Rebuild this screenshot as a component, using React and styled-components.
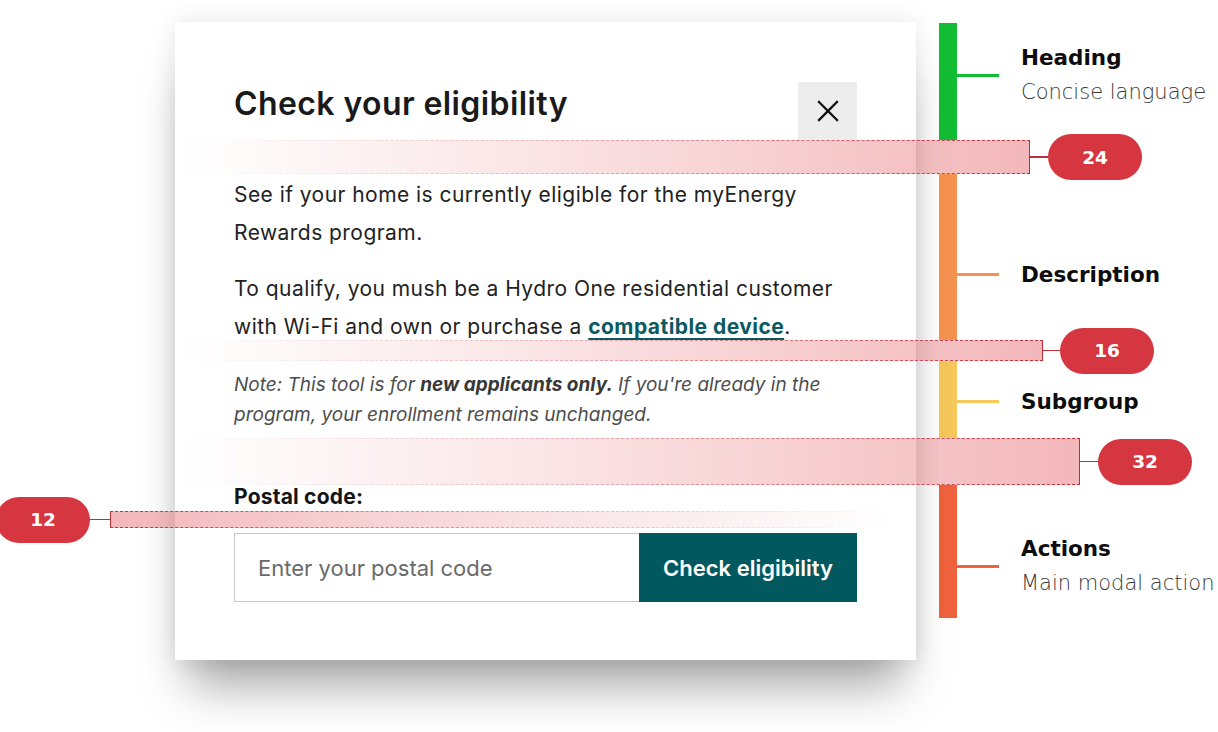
import styled, { createGlobalStyle } from "styled-components";

const GlobalStyle = createGlobalStyle`
  html, body {
    margin: 0;
    padding: 0;
    background: #ffffff;
  }
  body {
    width: 1218px;
    height: 732px;
    overflow: hidden;
    font-family: "Inter", "Roboto", sans-serif;
    color: #1f1f1f;
  }
  * {
    box-sizing: border-box;
  }
`;

const spacers = {
  heading: { height: 34, label: "24", side: "right", left: -49, right: -173, link: 18 },
  description: { height: 21, label: "16", side: "right", left: -49, right: -186, link: 17 },
  subgroup: { height: 47, label: "32", side: "right", left: -49, right: -223, link: 18 },
  label: { height: 17, label: "12", side: "left", left: -124, right: -33, link: 20 },
};

const sections = [
  { key: "heading", color: "#13bd33", height: 117, offset: 17, title: "Heading", sub: "Concise language" },
  { key: "gap1", gap: 34 },
  { key: "description", color: "#f5924f", height: 166, offset: 83, title: "Description" },
  { key: "gap2", gap: 21 },
  { key: "subgroup", color: "#f6c85b", height: 77, offset: 23, title: "Subgroup" },
  { key: "gap3", gap: 47 },
  { key: "actions", color: "#f0623d", height: 133, offset: 46, title: "Actions", sub: "Main modal action" },
];

function Spacing({ name }) {
  const s = spacers[name];
  return (
    <Spacer $height={s.height}>
      <Band $side={s.side} $left={s.left} $right={s.right} />
      <Callout $side={s.side} $left={s.left} $right={s.right}>
        {s.side === "left" && <Pill>{s.label}</Pill>}
        <Connector $width={s.link} />
        {s.side === "right" && <Pill>{s.label}</Pill>}
      </Callout>
    </Spacer>
  );
}

function CloseIcon() {
  return (
    <svg width="22" height="22" viewBox="0 0 22 22" fill="none">
      <path d="M2 2 L20 20 M20 2 L2 20" stroke="#111" strokeWidth="2.3" strokeLinecap="square" />
    </svg>
  );
}

export default function App() {
  return (
    <>
      <GlobalStyle />
      <Page>
        <Modal>
          <Header>
            <Title>Check your eligibility</Title>
            <CloseButton aria-label="Close">
              <CloseIcon />
            </CloseButton>
          </Header>
          <Spacing name="heading" />
          <Body>
            <Para>See if your home is currently eligible for the myEnergy Rewards program.</Para>
            <Para>
              To qualify, you mush be a Hydro One residential customer with Wi-Fi and own or purchase a{" "}
              <TextLink href="#">compatible device</TextLink>.
            </Para>
          </Body>
          <Spacing name="description" />
          <Note>
            Note: This tool is for <strong>new applicants only.</strong> If you're already in the program, your
            enrollment remains unchanged.
          </Note>
          <Spacing name="subgroup" />
          <FieldLabel htmlFor="postal">Postal code:</FieldLabel>
          <Spacing name="label" />
          <Form onSubmit={(e) => e.preventDefault()}>
            <PostalInput id="postal" placeholder="Enter your postal code" />
            <SubmitButton type="submit">Check eligibility</SubmitButton>
          </Form>
        </Modal>
        <Legend>
          {sections.map((s) =>
            s.gap ? (
              <LegendGap key={s.key} $height={s.gap} />
            ) : (
              <Section key={s.key} $height={s.height}>
                <Bar $color={s.color} />
                <Marker $offset={s.offset}>
                  <Tick $color={s.color} />
                  <LabelBlock>
                    <LegendTitle>{s.title}</LegendTitle>
                    {s.sub && <LegendSub>{s.sub}</LegendSub>}
                  </LabelBlock>
                </Marker>
              </Section>
            )
          )}
        </Legend>
      </Page>
    </>
  );
}

const Page = styled.div`
  display: flex;
  align-items: flex-start;
  gap: 23px;
  padding: 22px 0 0 175px;
`;

const Modal = styled.div`
  width: 741px;
  background: #ffffff;
  padding: 60px 59px 58px;
  display: flex;
  flex-direction: column;
  box-shadow: 0 0 22px rgba(0, 0, 0, 0.1), 0 40px 44px -14px rgba(0, 0, 0, 0.34);
  position: relative;
  z-index: 1;
`;

const Header = styled.div`
  display: flex;
  justify-content: space-between;
  align-items: flex-start;
  height: 58px;
`;

const Title = styled.h2`
  margin: 4px 0 0;
  font-family: "Inter", sans-serif;
  font-size: 32px;
  font-weight: 600;
  line-height: 36px;
  letter-spacing: 0.4px;
  color: #1a1a1a;
`;

const CloseButton = styled.button`
  width: 59px;
  height: 58px;
  border: none;
  background: #ededed;
  display: flex;
  align-items: center;
  justify-content: center;
  padding: 0;
  cursor: pointer;
`;

const Spacer = styled.div`
  position: relative;
  height: ${(p) => p.$height}px;
  flex-shrink: 0;
  z-index: 3;
`;

const Band = styled.div`
  position: absolute;
  top: 0;
  bottom: 0;
  left: ${(p) => p.$left}px;
  right: ${(p) => p.$right}px;
  background: rgba(232, 112, 118, 0.5);
  border-top: 1px dashed #c4303a;
  border-bottom: 1px dashed #c4303a;
  ${(p) =>
    p.$side === "right"
      ? `
    border-right: 1.5px solid #b9323b;
    mask-image: linear-gradient(90deg, rgba(0, 0, 0, 0) 0%, rgba(0, 0, 0, 0.35) 40%, rgba(0, 0, 0, 1) 100%);
  `
      : `
    border-left: 1.5px solid #b9323b;
    mask-image: linear-gradient(90deg, rgba(0, 0, 0, 1) 0%, rgba(0, 0, 0, 0.45) 50%, rgba(0, 0, 0, 0) 100%);
  `}
`;

const Callout = styled.div`
  position: absolute;
  top: 50%;
  transform: translateY(-50%);
  display: flex;
  align-items: center;
  ${(p) =>
    p.$side === "right"
      ? `left: calc(100% + ${-p.$right}px);`
      : `right: calc(100% + ${-p.$left}px);`}
`;

const Connector = styled.div`
  width: ${(p) => p.$width}px;
  height: 1.5px;
  background: #b9323b;
`;

const Pill = styled.div`
  width: 94px;
  height: 46px;
  border-radius: 23px;
  background: #d5363f;
  color: #ffffff;
  display: flex;
  align-items: center;
  justify-content: center;
  font-family: "DejaVu Sans", sans-serif;
  font-weight: 700;
  font-size: 18.5px;
`;

const Body = styled.div`
  padding-top: 2px;
  margin-bottom: -6px;
  display: flex;
  flex-direction: column;
  gap: 18px;
`;

const Para = styled.p`
  margin: 0;
  font-size: 21px;
  line-height: 38px;
  letter-spacing: 0.45px;
  color: #222222;
`;

const TextLink = styled.a`
  color: #0b5a61;
  font-weight: 700;
  text-decoration: underline;
  text-decoration-thickness: 2px;
  text-underline-offset: 4px;
`;

const Note = styled.p`
  margin: 0;
  padding: 9px 0 8px;
  font-size: 19px;
  line-height: 30px;
  font-style: italic;
  color: #4d4d4d;

  strong {
    color: #383838;
    font-weight: 700;
  }
`;

const FieldLabel = styled.label`
  display: block;
  padding-bottom: 2px;
  font-size: 21px;
  line-height: 24px;
  letter-spacing: 0.2px;
  font-weight: 700;
  color: #141414;
`;

const Form = styled.form`
  display: flex;
  margin-top: 5px;
  height: 69px;
`;

const PostalInput = styled.input`
  flex: 1;
  min-width: 0;
  height: 100%;
  border: 1.5px solid #c8c8c8;
  border-right: none;
  padding: 0 0 0 23px;
  font-family: "Inter", sans-serif;
  font-size: 22px;
  color: #222;
  outline: none;

  &::placeholder {
    color: #6a6a6a;
  }
`;

const SubmitButton = styled.button`
  width: 218px;
  height: 100%;
  border: none;
  background: #02585f;
  color: #ffffff;
  font-family: "Inter", sans-serif;
  font-size: 22px;
  font-weight: 600;
  cursor: pointer;
`;

const Legend = styled.div`
  display: flex;
  flex-direction: column;
  margin-top: 1px;
`;

const LegendGap = styled.div`
  height: ${(p) => p.$height}px;
`;

const Section = styled.div`
  display: flex;
  align-items: flex-start;
  height: ${(p) => p.$height}px;
`;

const Bar = styled.div`
  width: 18px;
  height: 100%;
  background: ${(p) => p.$color};
`;

const Marker = styled.div`
  display: flex;
  align-items: center;
  margin-top: ${(p) => p.$offset}px;
`;

const Tick = styled.div`
  width: 42px;
  height: 3px;
  background: ${(p) => p.$color};
`;

const LabelBlock = styled.div`
  display: flex;
  flex-direction: column;
  margin-left: 22px;
  font-family: "DejaVu Sans", sans-serif;
`;

const LegendTitle = styled.div`
  font-size: 21.5px;
  line-height: 35px;
  font-weight: 700;
  color: #0d0d0d;
  white-space: nowrap;
`;

const LegendSub = styled.div`
  font-size: 21px;
  line-height: 35px;
  font-weight: 300;
  color: #383838;
  white-space: nowrap;
`;
